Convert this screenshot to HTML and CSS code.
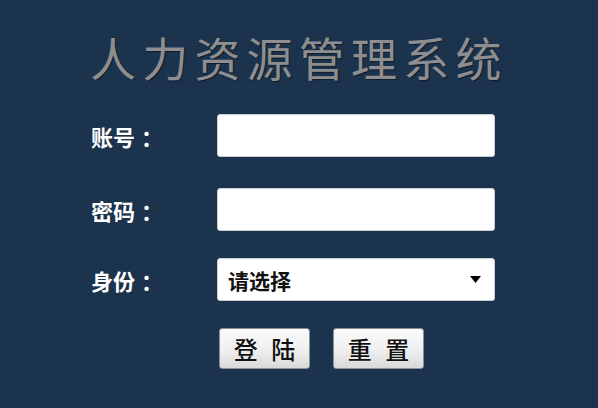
FILE: index.html
```html
<!DOCTYPE html>
<html lang="zh-CN">
<head>
<meta charset="utf-8">
<title>人力资源管理系统</title>
<link rel="stylesheet" href="styles.css">
</head>
<body>
<div class="page">
  <h1 class="title">人力资源管理系统</h1>
  <form class="form">
    <div class="row row-1">
      <label class="label">账号<span class="colon">：</span></label>
      <input class="field" type="text">
    </div>
    <div class="row row-2">
      <label class="label">密码<span class="colon">：</span></label>
      <input class="field" type="password">
    </div>
    <div class="row row-3">
      <label class="label">身份<span class="colon">：</span></label>
      <div class="select">
        <span class="select-text">请选择</span>
        <svg class="arrow" width="11" height="7" viewBox="0 0 11 7"><path d="M0 0H11L5.5 7Z" fill="#000"/></svg>
      </div>
    </div>
    <div class="row row-4">
      <span class="label"></span>
      <div class="buttons">
        <button type="button" class="btn">登 陆</button>
        <button type="button" class="btn">重 置</button>
      </div>
    </div>
  </form>
</div>
</body>
</html>
```
FILE: styles.css
```css
html, body {
  margin: 0;
  padding: 0;
}
body {
  width: 598px;
  height: 408px;
  background: #1c334d;
  overflow: hidden;
  font-family: "Noto Sans CJK SC", "Noto Sans", sans-serif;
}
.page {
  display: flex;
  flex-direction: column;
  padding-left: 91px;
}
.title {
  margin: 27px 0 0 -1px;
  height: 58px;
  font-size: 46px;
  line-height: 58px;
  font-weight: 400;
  letter-spacing: 6.2px;
  color: #8e8e90;
  text-shadow: 1px 1px 1px #101d2c;
  white-space: nowrap;
}
.form {
  display: flex;
  flex-direction: column;
  margin-top: 29px;
}
.row {
  display: grid;
  grid-template-columns: 126px 278px;
  align-items: center;
}
.row-2 { margin-top: 31px; }
.row-3 { margin-top: 27px; }
.row-4 { margin-top: 27px; }
.label {
  color: #ffffff;
  font-size: 22px;
  font-weight: 700;
  line-height: 24px;
  white-space: nowrap;
}
.colon {
  margin-left: 6px;
}
.field {
  box-sizing: border-box;
  width: 278px;
  height: 43px;
  margin: 0;
  border: 1px solid #c9ced4;
  border-radius: 3px;
  background: #ffffff;
  outline: none;
}
.select {
  box-sizing: border-box;
  width: 278px;
  height: 43px;
  border: 1px solid #c9ced4;
  border-radius: 3px;
  background: #ffffff;
  display: flex;
  align-items: center;
  justify-content: space-between;
  padding: 0 13px 0 10px;
}
.select-text {
  color: #111;
  font-size: 21px;
  font-weight: 700;
  line-height: 24px;
}
.arrow {
  display: block;
}
.buttons {
  display: flex;
  gap: 23px;
  padding-left: 2px;
}
.btn {
  box-sizing: border-box;
  width: 91px;
  height: 41px;
  margin: 0;
  padding: 0 0 0 4px;
  border: 1px solid #8c9096;
  border-radius: 3px;
  background: linear-gradient(#fbfbfb, #efefef 55%, #d9d9d9);
  color: #111;
  font-family: "Noto Sans CJK SC", "Noto Sans", sans-serif;
  font-size: 24px;
  font-weight: 500;
  line-height: 1;
  letter-spacing: 4px;
}
```
